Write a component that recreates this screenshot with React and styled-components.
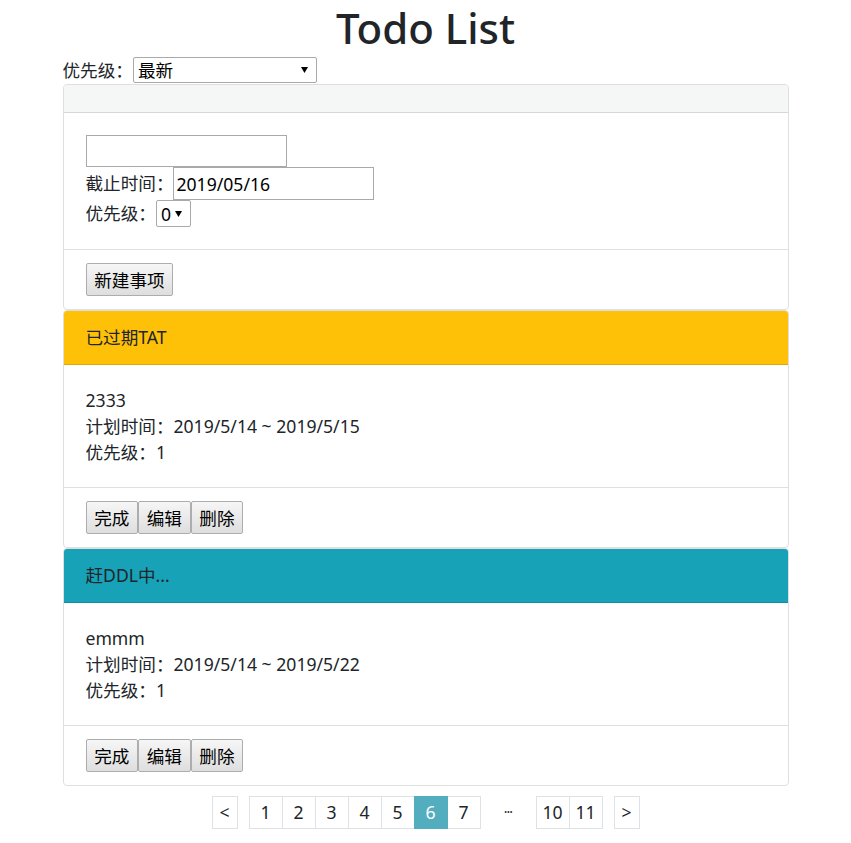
import React from "react";
import styled, { createGlobalStyle } from "styled-components";

const todos = [
  {
    id: 1,
    status: "已过期TAT",
    tone: "#ffc107",
    title: "2333",
    start: "2019/5/14",
    end: "2019/5/15",
    priority: 1,
  },
  {
    id: 2,
    status: "赶DDL中...",
    tone: "#17a2b8",
    title: "emmm",
    start: "2019/5/14",
    end: "2019/5/22",
    priority: 1,
  },
];

const pagesLeft = [1, 2, 3, 4, 5, 6, 7];
const pagesRight = [10, 11];
const currentPage = 6;

const arrow =
  "url(\"data:image/svg+xml,%3Csvg xmlns='http://www.w3.org/2000/svg' width='7' height='6'%3E%3Cpath d='M0 0h7L3.5 6z' fill='%23000'/%3E%3C/svg%3E\")";

const App = () => {
  return (
    <>
      <GlobalStyle />
      <Page>
        <Title>Todo List</Title>
        <FilterRow>
          <Label>优先级：</Label>
          <Select width="184px" height="26px" defaultValue="latest">
            <option value="latest">最新</option>
            <option value="high">最高</option>
          </Select>
        </FilterRow>

        <Card>
          <CardHeader />
          <CardBody>
            <FormRow height="32px">
              <TextInput width="201px" height="32px" />
            </FormRow>
            <FormRow height="33px">
              <Label>截止时间：</Label>
              <TextInput width="201px" height="33px" defaultValue="2019/05/16" />
            </FormRow>
            <FormRow height="27px">
              <Label>优先级：</Label>
              <Select width="35px" height="27px" defaultValue="0">
                <option value="0">0</option>
                <option value="1">1</option>
              </Select>
            </FormRow>
          </CardBody>
          <CardFooter>
            <Button>新建事项</Button>
          </CardFooter>
        </Card>

        {todos.map((todo) => (
          <Card key={todo.id}>
            <CardHeader tone={todo.tone}>{todo.status}</CardHeader>
            <CardBody>
              <Line>{todo.title}</Line>
              <Line>
                计划时间：{todo.start} ~ {todo.end}
              </Line>
              <Line>优先级：{todo.priority}</Line>
            </CardBody>
            <CardFooter>
              <Button>完成</Button>
              <Button>编辑</Button>
              <Button>删除</Button>
            </CardFooter>
          </Card>
        ))}

        <Pager>
          <PageItem narrow>&lt;</PageItem>
          <PageGroup>
            {pagesLeft.map((p) => (
              <PageItem key={p} active={p === currentPage}>
                {p}
              </PageItem>
            ))}
          </PageGroup>
          <Ellipsis>···</Ellipsis>
          <PageGroup>
            {pagesRight.map((p) => (
              <PageItem key={p}>{p}</PageItem>
            ))}
          </PageGroup>
          <PageItem narrow>&gt;</PageItem>
        </Pager>
      </Page>
    </>
  );
};

export default App;

// Styled Components
const GlobalStyle = createGlobalStyle`
  body {
    margin: 0;
    background: #ffffff;
    color: #212529;
    font-family: "Noto Sans", "Noto Sans CJK SC", sans-serif;
    font-size: 17.6px;
    line-height: 26.4px;
  }
  * {
    box-sizing: border-box;
  }
`;

const Page = styled.div`
  width: 726px;
  margin: 0 auto;
`;

const Title = styled.h1`
  margin: 0;
  line-height: 56px;
  font-size: 42px;
  font-weight: 500;
  text-align: center;
  color: #212529;
`;

const FilterRow = styled.div`
  display: flex;
  align-items: center;
  height: 28px;
`;

const Label = styled.span`
  white-space: nowrap;
`;

const Select = styled.select`
  appearance: none;
  width: ${(p) => p.width};
  height: ${(p) => p.height};
  margin: 0;
  padding: 0 16px 0 4px;
  border: 1px solid #a9a9a9;
  border-radius: 2px;
  background: #ffffff ${arrow} no-repeat right 8px center;
  font-family: inherit;
  font-size: 17.6px;
  color: #000000;
  outline: none;
`;

const Card = styled.div`
  display: flex;
  flex-direction: column;
  border: 1px solid #dfdfdf;
  border-radius: 4px;
  background: #ffffff;
  overflow: hidden;
`;

const CardHeader = styled.div`
  height: ${(p) => (p.tone ? "54px" : "28px")};
  padding: 0 22px;
  display: flex;
  align-items: center;
  background: ${(p) => p.tone || "#f5f6f6"};
  border-bottom: 1px solid rgba(0, 0, 0, 0.125);
`;

const CardBody = styled.div`
  padding: 22px;
`;

const FormRow = styled.div`
  display: flex;
  align-items: center;
  height: ${(p) => p.height};
`;

const TextInput = styled.input`
  width: ${(p) => p.width};
  height: ${(p) => p.height};
  margin: 0;
  padding: 0 2px;
  border: 1px solid #a9a9a9;
  font-family: inherit;
  font-size: 17.6px;
  color: #000000;
  outline: none;
`;

const Line = styled.div`
  height: 26px;
  line-height: 26px;
`;

const CardFooter = styled.div`
  display: flex;
  padding: 13px 22px;
  border-top: 1px solid #dfdfdf;
`;

const Button = styled.button`
  height: 33px;
  padding: 0 7.7px;
  margin: 0;
  border: 1px solid #adadad;
  border-radius: 2px;
  background: linear-gradient(#f6f6f6, #dedede);
  font-family: inherit;
  font-size: 17.6px;
  color: #000000;
  cursor: pointer;
`;

const Pager = styled.div`
  display: flex;
  justify-content: center;
  align-items: center;
  gap: 11px;
  margin-top: 10px;
`;

const PageGroup = styled.div`
  display: flex;
  & > * + * {
    margin-left: -1px;
  }
`;

const PageItem = styled.div`
  display: flex;
  align-items: center;
  justify-content: center;
  width: ${(p) => (p.narrow ? "26px" : "34px")};
  height: 33px;
  border: 1px solid ${(p) => (p.active ? "#52adbf" : "#dee2e6")};
  background: ${(p) => (p.active ? "#52adbf" : "#ffffff")};
  color: ${(p) => (p.active ? "#ffffff" : "#212529")};
  position: relative;
  z-index: ${(p) => (p.active ? 1 : 0)};
`;

const Ellipsis = styled.div`
  width: 33px;
  text-align: center;
  font-size: 14px;
  letter-spacing: -1px;
  color: #212529;
`;
